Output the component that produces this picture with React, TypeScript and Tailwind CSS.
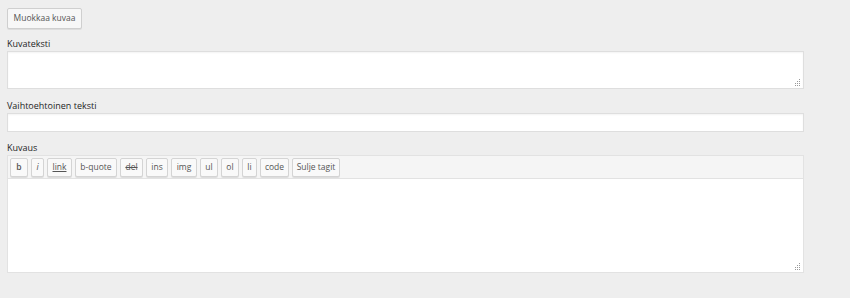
import React from "react";

const font = { fontFamily: '"Open Sans", "Noto Sans", "Liberation Sans", sans-serif' };

function Grip() {
  return (
    <svg width="7" height="7" viewBox="0 0 7 7" className="absolute right-[2px] bottom-[2px]">
      <rect x="5" y="0" width="1" height="1" fill="#999" />
      <rect x="5" y="2" width="1" height="1" fill="#999" />
      <rect x="3" y="2" width="1" height="1" fill="#999" />
      <rect x="5" y="4" width="1" height="1" fill="#999" />
      <rect x="3" y="4" width="1" height="1" fill="#999" />
      <rect x="1" y="4" width="1" height="1" fill="#999" />
      <rect x="5" y="6" width="1" height="1" fill="#999" />
      <rect x="3" y="6" width="1" height="1" fill="#999" />
      <rect x="1" y="6" width="1" height="1" fill="#999" />
    </svg>
  );
}

const tags: { t: string; w: number; cls?: string }[] = [
  { t: "b", w: 18, cls: "font-semibold" },
  { t: "i", w: 13, cls: "italic" },
  { t: "link", w: 25, cls: "underline" },
  { t: "b-quote", w: 42 },
  { t: "del", w: 23, cls: "line-through" },
  { t: "ins", w: 22 },
  { t: "img", w: 26 },
  { t: "ul", w: 18 },
  { t: "ol", w: 18 },
  { t: "li", w: 15 },
  { t: "code", w: 29 },
  { t: "Sulje tagit", w: 48 },
];

export default function App() {
  return (
    <div className="w-[850px] h-[298px] bg-[#eeeeee] overflow-hidden text-[#23282d]" style={font}>
      <div className="pl-[7px] pt-[8px] w-[804px]">
        <button className="h-[21px] w-[75px] rounded-[2px] border border-[#cfcfcf] bg-[#f7f7f7] text-[8.5px] whitespace-nowrap text-[#555] shadow-[0_1px_0_#ddd] flex items-center justify-center">
          Muokkaa kuvaa
        </button>

        <div className="mt-[9px] text-[9px] leading-[12px] font-medium text-[#1e1e1e]">Kuvateksti</div>
        <div className="relative mt-[1px] h-[38px] bg-white border border-[#dedede] shadow-[inset_0_1px_2px_rgba(0,0,0,0.05)]">
          <Grip />
        </div>

        <div className="mt-[11px] text-[9px] leading-[12px] font-medium text-[#1e1e1e]">Vaihtoehtoinen teksti</div>
        <div className="mt-[1px] h-[19px] bg-white border border-[#dedede] shadow-[inset_0_1px_2px_rgba(0,0,0,0.05)]" />

        <div className="mt-[10px] text-[9px] leading-[12px] font-medium text-[#1e1e1e]">Kuvaus</div>
        <div className="mt-[1px] border border-[#e2e2e2]">
          <div className="h-[23px] bg-[#f5f5f5] border-b border-[#e2e2e2] flex items-start gap-[3px] pl-[2px] pt-[2px]">
            {tags.map((b) => (
              <div
                key={b.t}
                style={{ width: b.w }}
                className="h-[19px] rounded-[2px] border border-[#d4d4d4] bg-[#f9f9f9] flex items-center justify-center text-[8.5px] text-[#555] shadow-[0_1px_0_#ddd]"
              >
                <span className={b.cls}>{b.t}</span>
              </div>
            ))}
          </div>
          <div className="relative h-[93px] bg-white">
            <Grip />
          </div>
        </div>
      </div>
    </div>
  );
}
